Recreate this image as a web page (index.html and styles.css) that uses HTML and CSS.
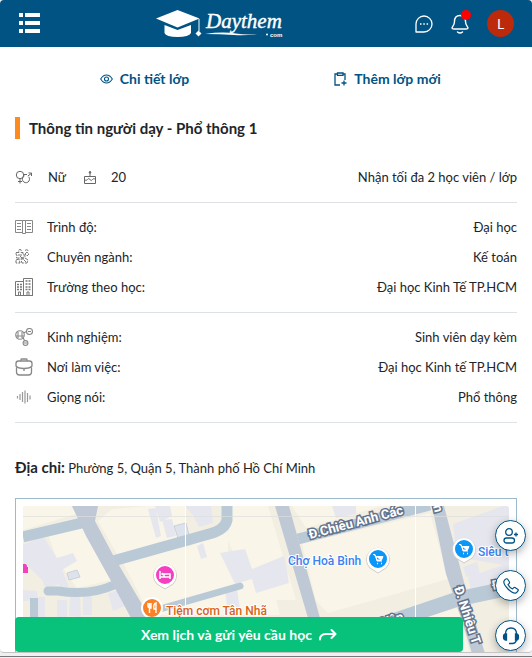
FILE: index.html
```html
<!DOCTYPE html>
<html lang="vi">
<head>
    <meta charset="UTF-8">
    <meta name="viewport" content="width=device-width, initial-scale=1.0">
    <title>Daythem - Thông tin người dạy</title>
    <link rel="stylesheet" href="styles.css">
</head>
<body>
<div class="screen">

    <!-- Header -->
    <header class="header">
        <button class="icon-btn" type="button" aria-label="Menu">
            <svg width="21" height="21" viewBox="0 0 21 21" fill="#fff">
                <path d="M0 0h4v4H0zM6 0h15v4H6zM0 8h4v4H0zM6 8h15v4H6zM0 16h4v4H0zM6 16h15v4H6z"/>
            </svg>
        </button>
        <a href="#" class="logo" aria-label="Daythem.com">
            <svg width="128" height="30" viewBox="0 0 128 30">
                <path fill="#fff" d="M0 9.500 21.500 1 43.500 9.500 21.500 18.500z"/>
                <path fill="#fff" d="M8.500 16 21.500 21 35 16V24Q33 28 21.500 28T8.500 24z"/>
                <path d="M43 10v12" stroke="#fff" stroke-width="1"/>
                <path fill="#fff" d="m42.500 21.500 3 3-3 3-3-3z"/>
                <text x="50" y="19" class="logo-text">Daythem</text>
                <path d="M49 25Q66 22.500 80 24.500T107 24Q92 27 78 26T49 25z" fill="#fff"/>
                <circle cx="111" cy="25.500" r="1" fill="#fff"/>
                <text x="114" y="28" class="logo-com">com</text>
            </svg>
        </a>
        <div class="header-actions">
            <button class="icon-btn" type="button" aria-label="Tin nhắn">
                <svg width="18" height="18" viewBox="0 0 18 18" fill="none" stroke="#fff" stroke-width="1.300">
                    <path d="M1 17V9a8 8 0 1 1 8 8z" stroke-linejoin="round"/>
                    <path d="M5 9h1.500M8.300 9h1.500M11.600 9h1.500" stroke-width="1.600"/>
                </svg>
            </button>
            <button class="icon-btn bell" type="button" aria-label="Thông báo">
                <svg width="18" height="20" viewBox="0 0 18 20" fill="none" stroke="#fff" stroke-width="1.400" stroke-linecap="round" stroke-linejoin="round">
                    <path d="M9 1.500C5 1.500 3.500 4.500 3.500 7.500c0 4-2.500 5-2.500 6.500 0 1 1 1 2 1h12c1 0 2 0 2-1 0-1.500-2.500-2.500-2.500-6.500 0-3-1.500-6-5.500-6z"/>
                    <path d="M6.500 18q2.500 2 5 0"/>
                </svg>
                <span class="dot"></span>
            </button>
            <button class="avatar" type="button">L</button>
        </div>
    </header>

    <main class="content">
        <nav class="tabs">
            <a href="#">
                <svg width="13" height="10" viewBox="0 0 13 10" fill="none" stroke="#005383" stroke-width="1.100">
                    <path d="M.7 5Q3 1 6.500 1t5.800 4Q10 9 6.500 9T.7 5z"/>
                    <circle cx="6.500" cy="5" r="2"/>
                </svg>
                Chi tiết lớp
            </a>
            <a href="#">
                <svg width="13" height="14" viewBox="0 0 13 14" fill="none" stroke="#005383" stroke-width="1.300">
                    <path d="M6 13H1V2h2.500M9 2h2v6M3.500 1h5.500v2.300H3.500zM10 8.500v5M7.500 11h5"/>
                </svg>
                Thêm lớp mới
            </a>
        </nav>

        <h1 class="title">Thông tin người dạy - Phổ thông 1</h1>

        <!-- Basic info -->
        <div class="summary">
            <svg width="18" height="14" viewBox="0 0 18 14" fill="none" stroke="#666" stroke-width="1">
                <circle cx="5" cy="5" r="3.700"/>
                <path d="M5 9v4.500M3 11.500h4M9.500 5.800a3.600 3.600 0 1 0 4.200 1M12.800 6l3.500-2.500M13.500 3h3v3M9 4.500h3"/>
            </svg>
            <span>Nữ</span>
            <svg class="cake" width="12" height="14" viewBox="0 0 12 14" fill="none" stroke="#666" stroke-width="1">
                <path d="M.5 13.500v-7h11v7zM6 6V2M5 3l1-2 1 2zM.5 9.500q1.500 2 3 0 1.300-2 2.500 0t2.500 0 3 0"/>
            </svg>
            <span>20</span>
            <span class="value">Nhận tối đa 2 học viên / lớp</span>
        </div>

        <!-- Education -->
        <dl class="info">
            <div class="row">
                <dt>
                    <svg width="18" height="16" viewBox="0 0 18 16" fill="none" stroke="#888" stroke-width="1">
                        <path d="M.5 1.500h7v12h-7zM10.500 1.500h7v12h-7zM7.500 1.500h3v13h-3zM2 4.500h4M2 7.500h4M2 10.500h4M12 4.500h4M12 7.500h4M12 10.500h4"/>
                    </svg>
                    Trình độ:
                </dt>
                <dd>Đại học</dd>
            </div>
            <div class="row">
                <dt>
                    <svg width="18" height="16" viewBox="0 0 18 16" fill="none" stroke="#777" stroke-width="1" stroke-dasharray="4 1">
                        <path d="M1 3.500h3q-1-3 1-3t1 3h2v2.500q2-1 2 1t-2 1v1H1.500V7Q3 6 1 5.500zM10 1.500q3-2 3 1M1 11l3-1 1 4H1zM6 11q0-2 2-1l2-1 3 2-1 3H7zM10 5l2-2 2 2-2 2zM5 7l6 6M3 6h4"/>
                    </svg>
                    Chuyên ngành:
                </dt>
                <dd>Kế toán</dd>
            </div>
            <div class="row">
                <dt>
                    <svg width="18" height="18" viewBox="0 0 18 18" fill="none" stroke="#777" stroke-width="1">
                        <path d="M.5 17.500V3.500h8v14M8.500 17.500V.5h9v17zM0 17.500h18M3.500 17v-3h2v3M12 17v-3h2v3"/>
                        <path d="M2 6.500h5M2 9h5M2 11.500h5M10.500 3h5M10.500 6h5M10.500 9h5M10.500 11.500h5" stroke-width="1.500" stroke-dasharray="2 1"/>
                    </svg>
                    Trường theo học:
                </dt>
                <dd>Đại học Kinh Tế TP.HCM</dd>
            </div>
        </dl>

        <!-- Experience -->
        <dl class="info">
            <div class="row">
                <dt>
                    <svg width="18" height="18" viewBox="0 0 18 18" fill="none" stroke="#888" stroke-width="1.100">
                        <circle cx="5" cy="7" r="4.300"/>
                        <circle cx="14.500" cy="3.500" r="3"/>
                        <circle cx="10.500" cy="15" r="2.400"/>
                        <path d="M13 3.500h3M9 15h3M8 9.500l1.500 3M8.500 5l3-1.500M3 4v6M7 4v6M1 8h8"/>
                    </svg>
                    Kinh nghiệm:
                </dt>
                <dd>Sinh viên dạy kèm</dd>
            </div>
            <div class="row">
                <dt>
                    <svg width="18" height="18" viewBox="0 0 18 18" fill="none" stroke="#888" stroke-width="1.300">
                        <path d="M6 3V1.500Q6 1 7 1h4q1 0 1 .5V3"/>
                        <rect x="1" y="3" width="16" height="7" rx="2.500" stroke="none"/>
                        <path d="M1 8V5.500Q1 3 3.500 3h11Q17 3 17 5.500V8q-2 2.500-8 2.500T1 8zM1.500 9.500V14q0 3 3 3h9q3 0 3-3V9.500M9 10.500v2.500"/>
                    </svg>
                    Nơi làm việc:
                </dt>
                <dd>Đại học Kinh tế TP.HCM</dd>
            </div>
            <div class="row">
                <dt>
                    <svg width="18" height="14" viewBox="0 0 18 14" stroke="#999" stroke-width="1.200">
                        <path d="M2.500 6v2.500M5 4v6M7.500 2v10M10 .5v13M12.500 3v9M15 5.500v4"/>
                    </svg>
                    Giọng nói:
                </dt>
                <dd>Phổ thông</dd>
            </div>
        </dl>

        <p class="address"><strong>Địa chỉ:</strong> Phường 5, Quận 5, Thành phố Hồ Chí Minh</p>

        <!-- Map -->
        <div class="map">
            <svg viewBox="23 505 486 200" preserveAspectRatio="xMinYMin slice">
                <rect x="23" y="505" width="486" height="200" fill="#f2eee2"/>
                <g fill="#f9f5e9">
                    <path d="M23 505h48l5 8-53 16zM48 533l33-8 30 54-34 8-20-28zM98 520l14-12 38-3h35v30l-68 18zM122 560l18-4 50-11 38-16v30l40 5 12 50H150zM130 605l10 12h-8zM230 505h38l28 94h-48l-4-20-16-40zM292 505h90l-76 22zM302 543l128-31 18 66-120 34-12-12zM420 505h12v6zM420 617l38-10 12 46h-50z"/>
                </g>
                <g fill="#e6e7ee">
                    <path d="M23 544l20-9 14 22 16-5 4 8-34 20-20-20zM40 573l14-6 5 16-13 6zM54 570l8-2 7 18-8 3zM23 589l14 1 1 9-15 1zM38 596h7v21h-9zM57 599h10v18H57zM70 596h10l1 20-12-1zM83 594h9v20h-9zM108 592l12-3 5 16-12 5zM148 508l8-1 5 28-5 2zM162 519l10-1 4 17-9 2zM155 505h15l2 10-12 6zM185 505h26l2 17-14 4-6-12zM220 552l25-4 7 20 32-13 3 14 2 13-33 10-4-14-17 5zM197 545l6-3 4 14-6 2zM225 590l12-3 3 22-12 2zM332 505h24v8l-20 4zM453 523l50-18h6v60l-52-9zM463 566l14-5 3 12-14 3zM468 576l41-14v20l-38 8z"/>
                </g>
                <path d="m174 525 12-3 3 12-11 3zM67 572l10-3 3 7-11 3z" fill="#dde2eb" stroke="#c8d1dd"/>
                <g fill="none" stroke="#bac9d6">
                    <path d="M23 536 86 521" stroke-width="11"/>
                    <path d="M113 560 209 533Q225 529 227 519V505" stroke-width="11"/>
                    <path d="M48 590h10Q90 595 114 584" stroke-width="9" stroke-linecap="round"/>
                    <path d="M34 597v60" stroke-width="8"/>
                    <path d="M146 612 240 585" stroke-width="7" stroke-linecap="round"/>
                    <path d="M298 538 430 504" stroke-width="11"/>
                    <path d="M360 631 458 598 509 587" stroke-width="15"/>
                </g>
                <path d="M72 505h26l-3 15 18 34 37 63 25 50h-22l-22-50-20-37-25-45z" fill="#bfc9d6"/>
                <path d="M275 505h14l31 112 8 40h-14l-6-40z" fill="#bfc9d6"/>
                <path d="M432 505h12l20 76 10 36 14 45h-13l-14-45-15-44z" fill="#bfc9d6"/>
                <path d="M185.500 505v150M415.500 505v150" stroke="#fff"/>
                <path d="M23 515.500h486" stroke="#dedfe0" opacity=".7"/>

                <!-- Street names -->
                <g class="street">
                    <text transform="translate(310 538) rotate(-15)">Đ.Chiêu Anh Các</text>
                    <text transform="translate(373 629) rotate(-17)">n Vân</text>
                    <text transform="translate(454 587) rotate(72)">Đ. Nhiêu T</text>
                    <text transform="translate(433 505) rotate(75)">n</text>
                    <text transform="translate(493 589) rotate(-12)">Đ.</text>
                </g>

                <!-- Places -->
                <g stroke="#fff" stroke-width="2">
                    <path d="M165 588l-8-5a11.500 11.500 0 1 1 16 0z" fill="#fff" stroke="#ccc" stroke-width="1"/>
                    <circle cx="165" cy="574" r="10" fill="#f53fc1"/>
                    <path d="M378 572l-8-5a11.500 11.500 0 1 1 16 0z" fill="#fff" stroke="#ccc" stroke-width="1"/>
                    <circle cx="378" cy="558" r="10" fill="#0c96f8"/>
                    <path d="M464 562l-8-5a11.500 11.500 0 1 1 16 0z" fill="#fff" stroke="#ccc" stroke-width="1"/>
                    <circle cx="464" cy="548" r="10" fill="#0c96f8"/>
                    <circle cx="152" cy="607" r="10" fill="#fb8127"/>
                    <circle cx="266" cy="626" r="10" fill="#005383" stroke="none"/>
                </g>
                <path d="M160 570v8M160 576h10v2M170 576v-3h-6v3" fill="none" stroke="#fff" stroke-width="1.500"/>
                <circle cx="162.500" cy="573" r="1.200" fill="#fff"/>
                <path d="M148 602v3q0 2 3 2v-5M149.500 602v10M156 612v-10q-3 1-2 6h2" fill="none" stroke="#fff" stroke-width="1.400"/>
                <g fill="#fff" stroke="#fff">
                    <path d="M373 553.500h2l2 6.500h5M376 555.500h7l-1.500 3.500h-4.500z"/>
                    <path d="M377 562.500h1M381 562.500h1" stroke-width="1.500"/>
                    <path d="M459 543.500h2l2 6.500h5M462 545.500h7l-1.500 3.500h-4.500z"/>
                    <path d="M463 552.500h1M467 552.500h1" stroke-width="1.500"/>
                </g>
                <path d="M23 563q4-1 4 3h1v6h-5z" fill="#f53fc1"/>
                <text x="288" y="564" class="place blue">Chợ Hoà Bình</text>
                <text x="478" y="555" class="place blue">Siêu t</text>
                <text x="166" y="614" class="place orange">Tiệm cơm Tân Nhã</text>
            </svg>
        </div>
    </main>

    <button class="request-btn" type="button">
        Xem lịch và gửi yêu cầu học
        <svg width="18" height="12" viewBox="0 0 18 12" fill="none" stroke="#fff" stroke-width="2" stroke-linecap="round" stroke-linejoin="round">
            <path d="M1 10.500Q1 5 7 5h9.500M12.500 1l4 4-4 4"/>
        </svg>
    </button>

    <!-- Contact buttons -->
    <div class="floating">
        <button type="button" aria-label="Thêm bạn">
            <svg width="16" height="16" viewBox="0 0 16 16" fill="none" stroke="#005383" stroke-width="1.300">
                <circle cx="6" cy="4" r="3.300"/>
                <rect x="1" y="10" width="10.500" height="5" rx="2.500"/>
                <path d="M13 4.500v4M11 6.500h4"/>
            </svg>
        </button>
        <button type="button" aria-label="Gọi điện">
            <svg width="16" height="16" viewBox="0 0 16 16" fill="none" stroke="#005383" stroke-width="1.200" stroke-linejoin="round">
                <path d="M1 3q2-3 3.500-2L6.500 4q.5 1-1.500 2.500Q6.500 9.500 9.500 11q1.500-2 2.500-1.500l3 2q1 1-2 3.500Q10 16 5 11T1 3z"/>
            </svg>
        </button>
        <button type="button" aria-label="Hỗ trợ">
            <svg width="18" height="18" viewBox="0 0 18 18" fill="none" stroke="#005383" stroke-width="1.300">
                <path d="M3.500 7Q3.500 1 9 1t5.500 6M14.500 13q-1 3.500-4 3.500H7"/>
                <path d="M4.500 7v6H3.500Q1.500 13 1.500 10t2-3zM13.500 7v6h1q2 0 2-3t-2-3z" fill="#005383"/>
            </svg>
        </button>
    </div>
</div>
<div class="bottom-edge"></div>
</body>
</html>
```

FILE: styles.css
```css
* {
    box-sizing: border-box;
}

body {
    font-family: Lato, "Noto Sans", sans-serif;
    font-size: 13px;
    line-height: 20px;
    color: #212529;
    margin: 0;
    height: 100vh;
    display: flex;
    flex-direction: column;
    background-color: #f1eff1;
}

button {
    font-family: inherit;
    border: 0;
    padding: 0;
    cursor: pointer;
}

svg {
    display: block;
    flex-shrink: 0;
}

.screen {
    position: relative;
    flex: 1;
    min-height: 0;
    overflow: hidden;
    background-color: #fff;
    border-bottom: 1px solid #c4c4c4;
    border-radius: 4px;
}

.bottom-edge {
    height: 4px;
    margin-bottom: 1px;
    border-bottom: 1px solid #777;
}

/* Header */
.header {
    display: flex;
    justify-content: space-between;
    align-items: center;
    height: 47px;
    padding: 0 18px 0 19px;
    background-color: #005383;
}

.icon-btn {
    background: none;
    position: relative;
}

.logo {
    margin-right: 16px;
}

.logo-text {
    font: italic 21px "Liberation Serif", serif;
    fill: #fff;
    stroke: #fff;
    stroke-width: 0.4px;
}

.logo-com {
    font: bold 6px "Liberation Sans", sans-serif;
    fill: #fff;
}

.header-actions {
    display: flex;
    align-items: center;
    gap: 18px;
}

.dot {
    position: absolute;
    top: -4px;
    right: -2px;
    width: 10px;
    height: 10px;
    border-radius: 50%;
    background-color: #f00;
}

.avatar {
    width: 27px;
    height: 27px;
    border-radius: 50%;
    background-color: #bc2a0b;
    color: #fff;
    font-size: 14px;
}

/* Content */
.content {
    padding: 0 15px;
}

.tabs {
    display: grid;
    grid-template-columns: 1fr 1fr;
    padding: 22px 8px;
}

.tabs a {
    display: flex;
    justify-content: center;
    align-items: center;
    gap: 7px;
    color: #005383;
    font-size: 14px;
    font-weight: bold;
    text-decoration: none;
}

.title {
    margin: 6px 0 0;
    padding-left: 9px;
    border-left: 5px solid #fd8b20;
    font-size: 15px;
    line-height: 22px;
}

.summary {
    display: flex;
    align-items: center;
    padding: 28px 0 15px;
    border-bottom: 1px solid #dee2e6;
    gap: 15px;
}

.cake {
    margin-left: 3px;
}

.summary .value {
    margin-left: auto;
}

.info {
    display: grid;
    gap: 10px;
    margin: 0;
    padding: 14px 0 15px;
    border-bottom: 1px solid #dee2e6;
}

.row {
    display: flex;
    justify-content: space-between;
}

.row dt {
    display: flex;
    align-items: center;
    gap: 14px;
}

.row dd {
    margin: 0;
}

.address {
    margin: 34px 0 20px;
}

.address strong {
    font-size: 15px;
}

.map {
    border: 1px solid #9dbacd;
    padding: 7px;
}

.map svg {
    width: 100%;
    border-radius: 3px;
}

.street {
    font: bold 13px Roboto, sans-serif;
    fill: #fff;
    stroke: #62738c;
    stroke-width: 3px;
    paint-order: stroke;
}

.place {
    font: 500 12px Roboto, sans-serif;
    stroke: #fff;
    stroke-width: 2px;
    paint-order: stroke;
}

.blue {
    fill: #3b7ff0;
}

.orange {
    fill: #d8631c;
}

/* Bottom bar */
.request-btn {
    position: absolute;
    left: 15px;
    right: 69px;
    bottom: 0;
    height: 35px;
    display: flex;
    justify-content: center;
    align-items: center;
    gap: 7px;
    border-radius: 4px;
    background-color: #08c27b;
    color: #fff;
    font-size: 14px;
    font-weight: bold;
}

.floating {
    position: absolute;
    right: 6px;
    bottom: 1px;
    display: grid;
    gap: 19px;
}

.floating button {
    width: 31px;
    height: 31px;
    display: flex;
    justify-content: center;
    align-items: center;
    border: 1px solid #005383;
    border-radius: 50%;
    background-color: #fff;
    box-shadow: 0 3px 8px rgba(0, 0, 0, 0.3);
}
```
